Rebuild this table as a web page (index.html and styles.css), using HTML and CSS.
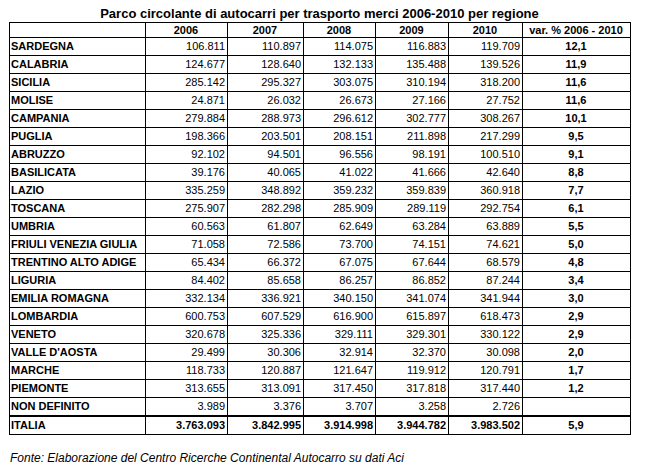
FILE: index.html
```html
<!DOCTYPE html>
<html lang="it">
<head>
<meta charset="utf-8">
<title>Parco circolante</title>
<link rel="stylesheet" href="styles.css">
</head>
<body>
<div class="wrap">
  <h1 class="title">Parco circolante di autocarri per trasporto merci 2006-2010 per regione</h1>
  <table class="data">
    <colgroup>
      <col class="c-reg"><col class="c-y1"><col class="c-y2"><col class="c-y3"><col class="c-y4"><col class="c-y5"><col class="c-var">
    </colgroup>
    <thead>
      <tr><th></th><th>2006</th><th>2007</th><th>2008</th><th>2009</th><th>2010</th><th>var. % 2006 - 2010</th></tr>
    </thead>
    <tbody>
      <tr><td class="reg">SARDEGNA</td><td>106.811</td><td>110.897</td><td>114.075</td><td>116.883</td><td>119.709</td><td class="var">12,1</td></tr>
      <tr><td class="reg">CALABRIA</td><td>124.677</td><td>128.640</td><td>132.133</td><td>135.488</td><td>139.526</td><td class="var">11,9</td></tr>
      <tr><td class="reg">SICILIA</td><td>285.142</td><td>295.327</td><td>303.075</td><td>310.194</td><td>318.200</td><td class="var">11,6</td></tr>
      <tr><td class="reg">MOLISE</td><td>24.871</td><td>26.032</td><td>26.673</td><td>27.166</td><td>27.752</td><td class="var">11,6</td></tr>
      <tr><td class="reg">CAMPANIA</td><td>279.884</td><td>288.973</td><td>296.612</td><td>302.777</td><td>308.267</td><td class="var">10,1</td></tr>
      <tr><td class="reg">PUGLIA</td><td>198.366</td><td>203.501</td><td>208.151</td><td>211.898</td><td>217.299</td><td class="var">9,5</td></tr>
      <tr><td class="reg">ABRUZZO</td><td>92.102</td><td>94.501</td><td>96.556</td><td>98.191</td><td>100.510</td><td class="var">9,1</td></tr>
      <tr><td class="reg">BASILICATA</td><td>39.176</td><td>40.065</td><td>41.022</td><td>41.666</td><td>42.640</td><td class="var">8,8</td></tr>
      <tr><td class="reg">LAZIO</td><td>335.259</td><td>348.892</td><td>359.232</td><td>359.839</td><td>360.918</td><td class="var">7,7</td></tr>
      <tr><td class="reg">TOSCANA</td><td>275.907</td><td>282.298</td><td>285.909</td><td>289.119</td><td>292.754</td><td class="var">6,1</td></tr>
      <tr><td class="reg">UMBRIA</td><td>60.563</td><td>61.807</td><td>62.649</td><td>63.284</td><td>63.889</td><td class="var">5,5</td></tr>
      <tr><td class="reg">FRIULI VENEZIA GIULIA</td><td>71.058</td><td>72.586</td><td>73.700</td><td>74.151</td><td>74.621</td><td class="var">5,0</td></tr>
      <tr><td class="reg">TRENTINO ALTO ADIGE</td><td>65.434</td><td>66.372</td><td>67.075</td><td>67.644</td><td>68.579</td><td class="var">4,8</td></tr>
      <tr><td class="reg">LIGURIA</td><td>84.402</td><td>85.658</td><td>86.257</td><td>86.852</td><td>87.244</td><td class="var">3,4</td></tr>
      <tr><td class="reg">EMILIA ROMAGNA</td><td>332.134</td><td>336.921</td><td>340.150</td><td>341.074</td><td>341.944</td><td class="var">3,0</td></tr>
      <tr><td class="reg">LOMBARDIA</td><td>600.753</td><td>607.529</td><td>616.900</td><td>615.897</td><td>618.473</td><td class="var">2,9</td></tr>
      <tr><td class="reg">VENETO</td><td>320.678</td><td>325.336</td><td>329.111</td><td>329.301</td><td>330.122</td><td class="var">2,9</td></tr>
      <tr><td class="reg">VALLE D'AOSTA</td><td>29.499</td><td>30.306</td><td>32.914</td><td>32.370</td><td>30.098</td><td class="var">2,0</td></tr>
      <tr><td class="reg">MARCHE</td><td>118.733</td><td>120.887</td><td>121.647</td><td>119.912</td><td>120.791</td><td class="var">1,7</td></tr>
      <tr><td class="reg">PIEMONTE</td><td>313.655</td><td>313.091</td><td>317.450</td><td>317.818</td><td>317.440</td><td class="var">1,2</td></tr>
      <tr><td class="reg">NON DEFINITO</td><td>3.989</td><td>3.376</td><td>3.707</td><td>3.258</td><td>2.726</td><td class="var"></td></tr>
      <tr class="total"><td class="reg">ITALIA</td><td>3.763.093</td><td>3.842.995</td><td>3.914.998</td><td>3.944.782</td><td>3.983.502</td><td class="var">5,9</td></tr>
    </tbody>
  </table>
  <p class="source">Fonte: Elaborazione del Centro Ricerche Continental Autocarro su dati Aci</p>
</div>
</body>
</html>
```

FILE: styles.css
```css
html, body {
  margin: 0;
  padding: 0;
  background: #ffffff;
  color: #000000;
  font-family: "Liberation Sans", Arial, sans-serif;
}

.wrap {
  padding-left: 9px;
  width: 621px;
}

.title {
  margin: 6px 0 0 0;
  font-size: 13px;
  line-height: 16px;
  font-weight: bold;
  text-align: center;
}

.data {
  border-collapse: collapse;
  table-layout: fixed;
  width: 621px;
  font-size: 11px;
  line-height: 13px;
}

.c-reg { width: 136px; }
.c-y1 { width: 82px; }
.c-y2 { width: 76px; }
.c-y3 { width: 72px; }
.c-y4 { width: 73px; }
.c-y5 { width: 74px; }
.c-var { width: 108px; }

.data th,
.data td {
  border: 1px solid #000000;
  padding: 0 2px 0 1px;
  white-space: nowrap;
  overflow: hidden;
}

.data th {
  height: 14px;
  font-weight: bold;
  text-align: center;
}

.data td {
  height: 17px;
  text-align: right;
}

.data td.reg {
  text-align: left;
  font-weight: bold;
}

.data td.var {
  text-align: center;
  font-weight: bold;
}

.data tr.total td {
  border-top: 2px solid #000000;
  font-weight: bold;
}

.source {
  margin: 15px 0 0 1px;
  font-size: 12px;
  line-height: 16px;
  font-style: italic;
}
```
